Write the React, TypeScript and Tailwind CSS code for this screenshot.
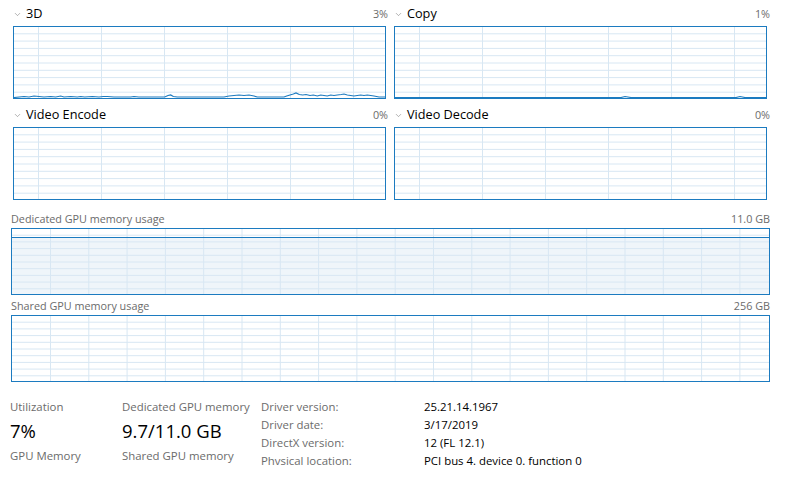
import { ChevronDown } from 'lucide-react'

/* ── Chart drawing ─────────────────────────────────── */

const BLUE = '#1c7bc0'
const GRID = '#d8e7f3'

interface ChartProps {
  width: number
  height: number
  colStart: number
  colStep: number
  rows: number
  line?: string
  fillFrom?: number
}

function Chart({ width, height, colStart, colStep, rows, line, fillFrom }: ChartProps) {
  const cols: number[] = []
  for (let x = colStart; x < width; x += colStep) cols.push(x)
  const rowLines = Array.from({ length: rows - 1 }, (_, i) => ((i + 1) * height) / rows)

  return (
    <div className="border border-[#1c7bc0] bg-white" style={{ width, height }}>
      <svg width={width - 2} height={height - 2} viewBox={`0 0 ${width - 2} ${height - 2}`} className="block">
        {fillFrom !== undefined && (
          <rect x={0} y={fillFrom} width={width} height={height} fill="#eff5fa" />
        )}
        {rowLines.map((y) => (
          <line key={`r${y}`} x1={0} x2={width} y1={y - 0.5} y2={y - 0.5} stroke={GRID} strokeWidth={1} />
        ))}
        {cols.map((x) => (
          <line key={`c${x}`} x1={x - 0.5} x2={x - 0.5} y1={0} y2={height} stroke={GRID} strokeWidth={1} />
        ))}
        {fillFrom !== undefined && (
          <line x1={0} x2={width} y1={fillFrom + 0.5} y2={fillFrom + 0.5} stroke={BLUE} strokeWidth={1} />
        )}
        {line && <path d={line} fill="none" stroke={BLUE} strokeWidth={1.2} />}
      </svg>
    </div>
  )
}

// Wave along the bottom of the 3D graph (x in 3x zoom units, shifted)
const WAVE_3D =
  'M0 70.5 L30 69.5 L45 70 L60 69 L75 69.5 L90 70 L110 69.5 L125 70 L140 69 L150 70 L170 69.5 L190 70 L200 69.5 L212 70 L235 69.5 L255 70 L268 69.5 L280 69.5 L300 70 L322 70 L340 70 L350 70 L360 69.5 L374 70 L388 70 L405 70 L420 70 L438 70 L452 70 L462 68.5 L470 68 L478 69.5 L490 70 L508 70 L520 70 L530 70 L550 70 L563 70 L575 70 L590 70 L605 70 L618 70 L630 70 L645 69 L660 68.5 L675 68 L690 68.5 L705 68 L720 69 L730 70 L740 70 L750 70 L760 70 L775 70 L790 70 L800 70 L810 70 L818 69 L828 68 L838 67 L846 66 L856 67.5 L866 68 L876 67.5 L888 68.5 L898 68 L910 69 L920 68 L930 68.5 L940 69 L950 68 L960 68.5 L970 68 L982 67.5 L990 67 L1000 68 L1010 68.5 L1020 69 L1030 68.5 L1040 68 L1050 68.5 L1060 68 L1070 68.5 L1080 69 L1095 70 L1120 70'

function scaleX(d: string, k: number) {
  return d.replace(/([ML])(\d+(?:\.\d+)?) /g, (_, c, x) => `${c}${(Number(x) * k).toFixed(1)} `)
}

/* ── Pieces ────────────────────────────────────────── */

function EngineGraph({ title, pct, line, tall }: { title: string; pct: string; line?: string; tall?: boolean }) {
  return (
    <div className="flex flex-col">
      <div className={`flex items-center ${tall ? 'h-[28px] pt-[4px]' : 'h-[26px] pt-[2px]'}`}>
        <ChevronDown size={9} strokeWidth={1.5} className="mr-[4px] text-[#7a7a7a]" />
        <span className="text-[12.7px] text-black">{title}</span>
        <span className="ml-auto mr-[-2px] text-[10.8px] text-[#6b6b6b]">{pct}</span>
      </div>
      <Chart width={373} height={73} colStart={25} colStep={63} rows={10} line={line} />
    </div>
  )
}

const DETAILS = [
  ['Driver version:', '25.21.14.1967'],
  ['Driver date:', '3/17/2019'],
  ['DirectX version:', '12 (FL 12.1)'],
  ['Phvsical location:', 'PCI bus 4. device 0. function 0'],
]

/* ── App ───────────────────────────────────────────── */

export default function App() {
  return (
    <div className="h-[479px] w-[788px] overflow-hidden bg-white font-['Open_Sans','Noto_Sans',sans-serif]">
      <div className="grid grid-cols-[373px_374px] gap-x-[8px] pl-[13px]">
        <EngineGraph title="3D" pct="3%" line={scaleX(WAVE_3D, 1 / 3)} />
        <EngineGraph title="Copy" pct="1%" line="M0 70.5 L226 70.5 L230 69.5 L236 70.5 L341 70.5 L345 69.5 L350 70.5 L373 70.5" />
        <EngineGraph title="Video Encode" pct="0%" tall />
        <EngineGraph title="Video Decode" pct="0%" tall />
      </div>

      <div className="pl-[11px]">
        <div className="flex h-[28px] w-[759px] items-end pb-[1px] text-[10.8px] text-[#6b6b6b]">
          <span>Dedicated GPU memory usage</span>
          <span className="ml-auto">11.0 GB</span>
        </div>
        <Chart width={759} height={67} colStart={39} colStep={38.3} rows={10} fillFrom={8} />
        <div className="flex h-[20px] w-[759px] items-end pb-[1px] text-[10.8px] text-[#6b6b6b]">
          <span>Shared GPU memory usage</span>
          <span className="ml-auto">256 GB</span>
        </div>
        <Chart width={759} height={67} colStart={39} colStep={38.3} rows={10} />
      </div>

      <div className="flex pt-[16px] pl-[10px] text-[11.4px]">
        <div className="flex w-[112px] flex-col">
          <span className="leading-[18px] text-[#6b6b6b]">Utilization</span>
          <span className="mt-[1px] text-[18.5px] leading-[28px] text-black">7%</span>
          <span className="mt-[2px] leading-[18px] text-[#6b6b6b]">GPU Memory</span>
        </div>
        <div className="flex w-[139px] flex-col">
          <span className="leading-[18px] whitespace-nowrap text-[#6b6b6b]">Dedicated GPU memory</span>
          <span className="mt-[1px] text-[18.5px] leading-[28px] text-black">9.7/11.0 GB</span>
          <span className="mt-[2px] leading-[18px] whitespace-nowrap text-[#6b6b6b]">Shared GPU memory</span>
        </div>
        <div className="grid grid-cols-[163px_1fr]">
          {DETAILS.map(([k, v]) => (
            <div key={k} className="contents">
              <span className="leading-[18px] text-[#6b6b6b]">{k}</span>
              <span className="leading-[18px] text-black">{v}</span>
            </div>
          ))}
        </div>
      </div>
    </div>
  )
}
